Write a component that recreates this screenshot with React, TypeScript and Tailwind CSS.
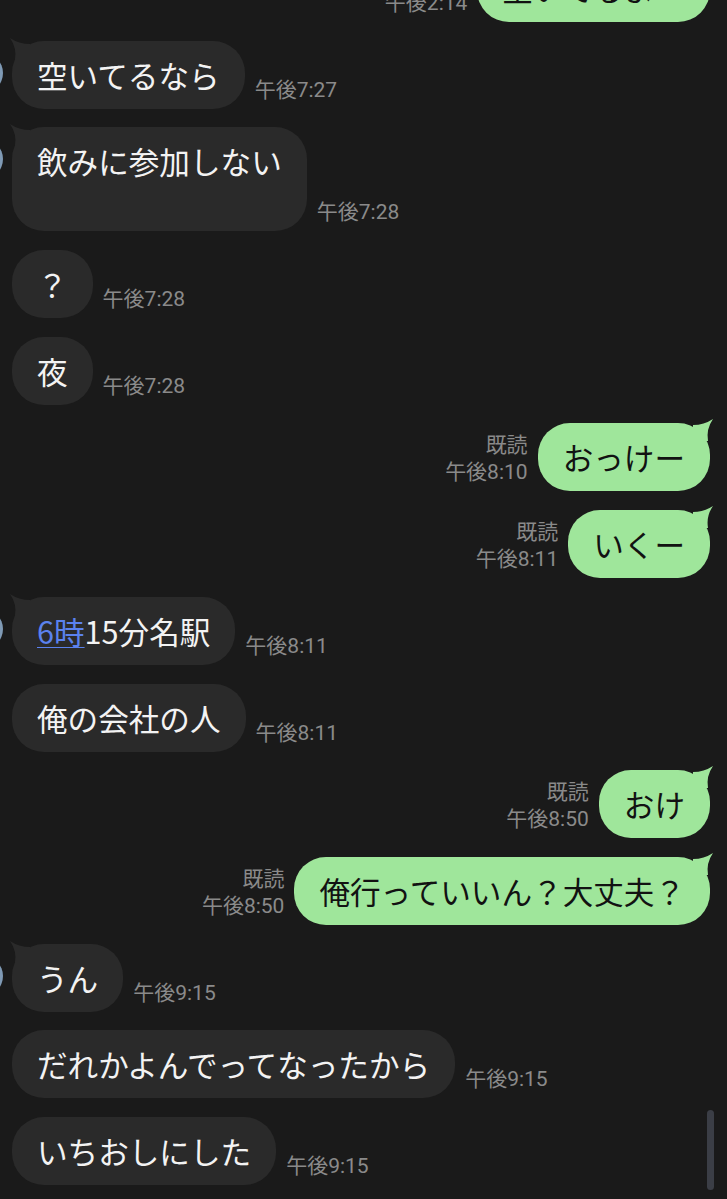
import React from 'react';

type Msg = {
  side: 'left' | 'right';
  text: React.ReactNode;
  time: string;
  read?: boolean;
  avatar?: boolean;
  tall?: boolean;
};

const messages: Msg[] = [
  { side: 'left', text: '空いてるなら', time: '午後7:27', avatar: true },
  { side: 'left', text: '飲みに参加しない', time: '午後7:28', avatar: true, tall: true },
  { side: 'left', text: '？', time: '午後7:28' },
  { side: 'left', text: '夜', time: '午後7:28' },
  { side: 'right', text: 'おっけー', time: '午後8:10', read: true },
  { side: 'right', text: 'いくー', time: '午後8:11', read: true },
  {
    side: 'left',
    text: (
      <>
        <span className="text-[#5b82ee] underline decoration-1 underline-offset-[3px]">6時</span>15分名駅
      </>
    ),
    time: '午後8:11',
    avatar: true,
  },
  { side: 'left', text: '俺の会社の人', time: '午後8:11' },
  { side: 'right', text: 'おけ', time: '午後8:50', read: true },
  { side: 'right', text: '俺行っていいん？大丈夫？', time: '午後8:50', read: true },
  { side: 'left', text: 'うん', time: '午後9:15', avatar: true },
  { side: 'left', text: 'だれかよんでってなったから', time: '午後9:15' },
  { side: 'left', text: 'いちおしにした', time: '午後9:15' },
];

const font = { fontFamily: '"Noto Sans CJK JP", "Noto Sans", sans-serif' };

function Tail({ side, color }: { side: 'left' | 'right'; color: string }) {
  if (side === 'left') {
    return (
      <svg className="absolute left-[-2px] top-[-3px]" width="22" height="22" viewBox="0 0 22 22">
        <path d="M0 0 Q9 6 20 6 L20 22 L5 22 Q7 10 0 0 Z" fill={color} />
      </svg>
    );
  }
  return (
    <svg className="absolute right-[-3px] top-[-4px]" width="22" height="22" viewBox="0 0 22 22">
      <path d="M22 0 Q13 6 2 6 L2 22 L17 22 Q15 10 22 0 Z" fill={color} />
    </svg>
  );
}

function Bubble({ msg }: { msg: Msg }) {
  const left = msg.side === 'left';
  const color = left ? '#2a2a2a' : '#9fe69b';
  return (
    <div
      className={`relative rounded-[32px] px-[25px] py-[16px] text-[30.6px] leading-[36px] whitespace-nowrap ${
        left ? 'bg-[#2a2a2a] text-[#f3f3f3]' : 'bg-[#9fe69b] text-[#121212]'
      }`}
      style={font}
    >
      {(msg.avatar || !left) && <Tail side={msg.side} color={color} />}
      <span className="relative">{msg.text}</span>
      {msg.tall && <div className="h-[36px]" />}
    </div>
  );
}

function Meta({ msg }: { msg: Msg }) {
  return (
    <div
      className={`flex flex-col text-[21px] leading-[27px] text-[#8a8a8a] mb-[5px] ${
        msg.side === 'right' ? 'items-end' : 'items-start'
      }`}
      style={{ fontFamily: 'Roboto, "Noto Sans CJK JP", sans-serif' }}
    >
      {msg.read && <span>既読</span>}
      <span>{msg.time}</span>
    </div>
  );
}

function Row({ msg }: { msg: Msg }) {
  const left = msg.side === 'left';
  return (
    <div className={`relative flex items-end gap-[10px] ${left ? 'justify-start pl-[12px]' : 'justify-end pr-[17px]'}`}>
      {left && msg.avatar && (
        <div className="absolute left-[-37px] top-[12px] w-[40px] h-[40px] rounded-full bg-[#7f9ab5]" />
      )}
      {left ? (
        <>
          <Bubble msg={msg} />
          <Meta msg={msg} />
        </>
      ) : (
        <>
          <Meta msg={msg} />
          <Bubble msg={msg} />
        </>
      )}
    </div>
  );
}

export default function App() {
  return (
    <div className="relative w-[727px] h-[1199px] overflow-hidden bg-[#1a1a1a]">
      <div className="flex flex-col gap-[18.7px] mt-[-46px]">
        <Row msg={{ side: 'right', text: '空いてるよー', time: '午後2:14' }} />
        {messages.map((m, i) => (
          <Row key={i} msg={m} />
        ))}
      </div>
      <div className="absolute right-[13px] bottom-[9px] w-[7px] h-[80px] rounded-full bg-[#3b3e46]" />
    </div>
  );
}
